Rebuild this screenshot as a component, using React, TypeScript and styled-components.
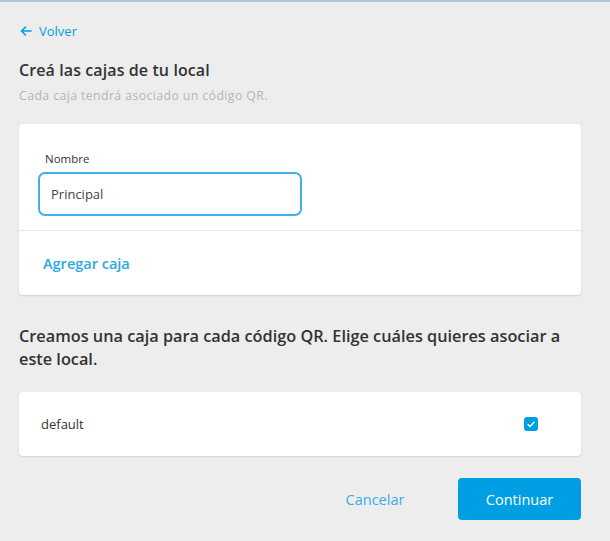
import React from "react";
import styled, { createGlobalStyle } from "styled-components";

const Global = createGlobalStyle`
  html, body { margin: 0; padding: 0; background: #ededed; }
  body { font-family: "Open Sans", "Liberation Sans", Arial, sans-serif; -webkit-font-smoothing: antialiased; }
  * { box-sizing: border-box; }
`;

const Page = styled.div`
  width: 610px;
  min-height: 541px;
  background: #ededed;
  border-top: 2px solid #a9c9d8;
  padding: 20px 29px 0 19px;
  display: flex;
  flex-direction: column;
`;

const Back = styled.a`
  display: flex;
  align-items: center;
  gap: 7px;
  color: #009ee3;
  font-size: 13px;
  text-decoration: none;
  height: 18px;
  margin-left: 1px;
`;

const Title = styled.h1`
  margin: 19px 0 0;
  font-size: 16px;
  font-weight: 600;
  color: #333;
  line-height: 22px;
  letter-spacing: 0.1px;
`;

const Subtitle = styled.p`
  margin: 6px 0 0;
  font-size: 12.3px;
  color: #b5b5b5;
  line-height: 17px;
  letter-spacing: 0.4px;
`;

const Card = styled.div<{ $mt: number }>`
  margin-top: ${(p) => p.$mt}px;
  background: #fff;
  border-radius: 4px;
  box-shadow: 0 1px 2px rgba(0, 0, 0, 0.12);
`;

const FieldSection = styled.div`
  padding: 27px 19px 14px 19px;
  border-bottom: 1px solid #e6e6e6;
`;

const LinkSection = styled.div`
  height: 64px;
  padding: 0 24px;
  display: flex;
  align-items: center;
`;

const Label = styled.label`
  display: block;
  font-size: 11.5px;
  color: #333;
  margin-left: 7px;
  line-height: 16px;
`;

const Input = styled.div`
  margin-top: 5px;
  width: 264px;
  height: 44px;
  border: 2px solid #3fb0e8;
  border-radius: 7px;
  display: flex;
  align-items: center;
  padding-left: 11px;
  font-size: 13px;
  color: #444;
`;

const Link = styled.a`
  color: #2aa8e6;
  font-size: 14.5px;
  font-weight: 600;
  text-decoration: none;
`;

const Para = styled.p`
  margin: 30px 0 0;
  font-size: 16.3px;
  font-weight: 600;
  color: #333;
  line-height: 23px;
`;

const Row = styled.div`
  height: 64px;
  padding: 0 43px 0 22px;
  display: flex;
  align-items: center;
  justify-content: space-between;
  font-size: 13px;
  color: #333;
`;

const Check = styled.span`
  width: 14px;
  height: 14px;
  border-radius: 3px;
  background: #009ee3;
  display: flex;
  align-items: center;
  justify-content: center;
`;

const Actions = styled.div`
  margin-top: 22px;
  display: flex;
  justify-content: flex-end;
  align-items: center;
  gap: 33px;
`;

const GhostButton = styled.button`
  background: none;
  border: none;
  color: #3aaee6;
  font-family: inherit;
  font-size: 14.5px;
  width: 100px;
  height: 42px;
  padding: 0;
`;

const PrimaryButton = styled.button`
  background: #009ee3;
  border: none;
  border-radius: 4px;
  color: #fff;
  font-family: inherit;
  font-size: 14.5px;
  width: 123px;
  height: 42px;
`;

export default function App() {
  return (
    <>
      <Global />
      <Page>
        <Back href="#">
          <svg width="12" height="10" viewBox="0 0 12 10" fill="none">
            <path d="M11 5H1.5M5.5 1L1.5 5l4 4" stroke="#009ee3" strokeWidth="1.6" strokeLinecap="round" strokeLinejoin="round" />
          </svg>
          Volver
        </Back>
        <Title>Creá las cajas de tu local</Title>
        <Subtitle>Cada caja tendrá asociado un código QR.</Subtitle>
        <Card $mt={20}>
          <FieldSection>
            <Label>Nombre</Label>
            <Input>Principal</Input>
          </FieldSection>
          <LinkSection>
            <Link href="#">Agregar caja</Link>
          </LinkSection>
        </Card>
        <Para>
          Creamos una caja para cada código QR. Elige cuáles quieres asociar a este local.
        </Para>
        <Card $mt={21}>
          <Row>
            default
            <Check>
              <svg width="8" height="7" viewBox="0 0 8 7" fill="none">
                <path d="M1 3.6L3 5.5 7 1.2" stroke="#fff" strokeWidth="1.4" strokeLinecap="round" strokeLinejoin="round" />
              </svg>
            </Check>
          </Row>
        </Card>
        <Actions>
          <GhostButton>Cancelar</GhostButton>
          <PrimaryButton>Continuar</PrimaryButton>
        </Actions>
      </Page>
    </>
  );
}
